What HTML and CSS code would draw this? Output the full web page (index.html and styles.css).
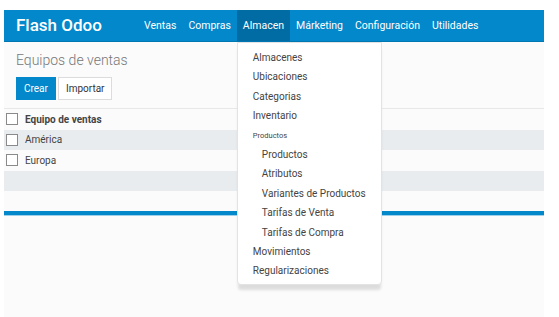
FILE: index.html
```html
<!DOCTYPE html>
<html lang="es">
  <head>
    <meta charset="UTF-8" />
    <meta name="viewport" content="width=device-width, initial-scale=1.0" />
    <title>Flash Odoo | Equipos de ventas</title>
    <link rel="stylesheet" href="styles.css">
  </head>
  <body>
    <div class="app">
      <!-- top bar -->
      <header class="navbar">
        <span class="brand">Flash Odoo</span>
        <ul class="nav">
          <li class="nav-item">Ventas</li>
          <li class="nav-item">Compras</li>
          <li class="nav-item active">
            Almacen
            <!-- open dropdown -->
            <ul class="dropdown">
              <li class="dd-item">Almacenes</li>
              <li class="dd-item">Ubicaciones</li>
              <li class="dd-item">Categorias</li>
              <li class="dd-item">Inventario</li>
              <li class="dd-header">Productos</li>
              <li class="dd-item sub">Productos</li>
              <li class="dd-item sub">Atributos</li>
              <li class="dd-item sub">Variantes de Productos</li>
              <li class="dd-item sub">Tarifas de Venta</li>
              <li class="dd-item sub">Tarifas de Compra</li>
              <li class="dd-item">Movimientos</li>
              <li class="dd-item">Regularizaciones</li>
            </ul>
          </li>
          <li class="nav-item">Márketing</li>
          <li class="nav-item">Configuración</li>
          <li class="nav-item">Utilidades</li>
        </ul>
      </header>

      <!-- content -->
      <main class="content">
        <div class="control-panel">
          <h1 class="title">Equipos de ventas</h1>
          <div class="buttons">
            <button class="btn btn-primary">Crear</button>
            <button class="btn">Importar</button>
          </div>
        </div>

        <table class="list">
          <thead>
            <tr>
              <th class="col-check"><span class="checkbox"></span></th>
              <th>Equipo de ventas</th>
            </tr>
          </thead>
          <tbody>
            <tr class="odd">
              <td class="col-check"><span class="checkbox"></span></td>
              <td>América</td>
            </tr>
            <tr>
              <td class="col-check"><span class="checkbox"></span></td>
              <td>Europa</td>
            </tr>
            <tr class="odd">
              <td class="col-check"></td>
              <td></td>
            </tr>
          </tbody>
        </table>

        <div class="footer-bar"></div>
      </main>
    </div>
  </body>
</html>
```

FILE: styles.css
```css
/* resets */
* {
  padding: 0;
  margin: 0;
  box-sizing: border-box;
}
body {
  font-family: Roboto, "Liberation Sans", sans-serif;
  background: #fff;
  color: #444;
}
ul {
  list-style: none;
}

.app {
  width: 540px;
  margin: 10px 0 0 4px;
}

/* navbar */
.navbar {
  display: flex;
  align-items: stretch;
  height: 32px;
  background-color: #0288cb;
  border-bottom: 1px solid #0077b3;
}
.brand {
  color: #fff;
  font-size: 17px;
  font-weight: 500;
  line-height: 31px;
  padding-left: 12px;
  width: 134px;
}
.nav {
  display: flex;
}
.nav-item {
  position: relative;
  color: #fff;
  font-size: 10.5px;
  line-height: 31px;
  padding: 0 6px;
}
.nav-item.active {
  background-color: #016ca4;
}

/* dropdown */
.dropdown {
  position: absolute;
  top: 32px;
  left: 0;
  width: 145px;
  padding: 5px 0 3px;
  background: #fff;
  border: 1px solid #e3e3e3;
  border-radius: 0 0 4px 4px;
  box-shadow: 0 6px 3px -1px rgba(0, 0, 0, 0.12);
  z-index: 10;
}
.dd-item {
  color: #444;
  font-size: 10px;
  line-height: 19.4px;
  padding-left: 15px;
  white-space: nowrap;
}
.dd-item.sub {
  padding-left: 24px;
}
.dd-header {
  color: #444;
  font-size: 7.5px;
  line-height: 19.4px;
  padding-left: 15px;
}

/* content */
.content {
  background-color: #fbfbfb;
  height: 275px;
}
.control-panel {
  padding: 10px 0 8px 12px;
  border-bottom: 1px solid #e8e8e8;
}
.title {
  color: #777;
  font-size: 14px;
  font-weight: 300;
  line-height: 16px;
  margin-bottom: 9px;
}
.buttons {
  display: flex;
  gap: 2px;
}
.btn {
  font-family: inherit;
  font-size: 10px;
  height: 23px;
  padding: 0 7px;
  background: #fff;
  color: #333;
  border: 1px solid #dcdcdc;
}
.btn-primary {
  background-color: #0288cb;
  border-color: #0288cb;
  color: #fff;
}

/* list */
.list {
  width: 100%;
  border-collapse: collapse;
  font-size: 10px;
}
.list th,
.list td {
  height: 20.5px;
  text-align: left;
  color: #444;
}
.list th {
  font-weight: 700;
}
.list tr.odd {
  background-color: #e9ecef;
}
.col-check {
  width: 21px;
  padding-left: 2px;
}
.checkbox {
  display: block;
  width: 12px;
  height: 12px;
  border: 1px solid #8a8a8a;
  background: #fff;
}

.footer-bar {
  margin-top: 20px;
  height: 5px;
  background-color: #0288cb;
  border-bottom: 1px solid #9fd0ea;
}
```
